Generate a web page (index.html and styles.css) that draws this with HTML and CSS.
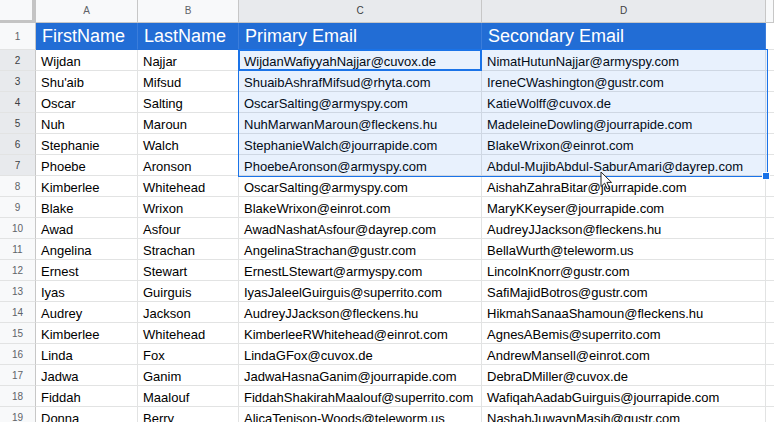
FILE: index.html
```html
<!DOCTYPE html>
<html>
<head>
<meta charset="utf-8">
<link rel="stylesheet" href="styles.css">
</head>
<body>
<div class="sheet">
  <div class="row colhead">
    <div class="corner"></div>
    <div class="ch">A</div>
    <div class="ch">B</div>
    <div class="ch sel">C</div>
    <div class="ch sel">D</div>
    <div class="ch rest"></div>
  </div>
  <div class="row head">
    <div class="rh">1</div>
    <div class="c">FirstName</div>
    <div class="c">LastName</div>
    <div class="c">Primary Email</div>
    <div class="c">Secondary Email</div>
    <div class="c rest"></div>
  </div>
  <div class="row data"><div class="rh sel">2</div><div class="c">Wijdan</div><div class="c">Najjar</div><div class="c">WijdanWafiyyahNajjar@cuvox.de</div><div class="c">NimatHutunNajjar@armyspy.com</div><div class="c rest"></div></div>
  <div class="row data"><div class="rh sel">3</div><div class="c">Shu'aib</div><div class="c">Mifsud</div><div class="c">ShuaibAshrafMifsud@rhyta.com</div><div class="c">IreneCWashington@gustr.com</div><div class="c rest"></div></div>
  <div class="row data"><div class="rh sel">4</div><div class="c">Oscar</div><div class="c">Salting</div><div class="c">OscarSalting@armyspy.com</div><div class="c">KatieWolff@cuvox.de</div><div class="c rest"></div></div>
  <div class="row data"><div class="rh sel">5</div><div class="c">Nuh</div><div class="c">Maroun</div><div class="c">NuhMarwanMaroun@fleckens.hu</div><div class="c">MadeleineDowling@jourrapide.com</div><div class="c rest"></div></div>
  <div class="row data"><div class="rh sel">6</div><div class="c">Stephanie</div><div class="c">Walch</div><div class="c">StephanieWalch@jourrapide.com</div><div class="c">BlakeWrixon@einrot.com</div><div class="c rest"></div></div>
  <div class="row data"><div class="rh sel">7</div><div class="c">Phoebe</div><div class="c">Aronson</div><div class="c">PhoebeAronson@armyspy.com</div><div class="c">Abdul-MujibAbdul-SaburAmari@dayrep.com</div><div class="c rest"></div></div>
  <div class="row data"><div class="rh">8</div><div class="c">Kimberlee</div><div class="c">Whitehead</div><div class="c">OscarSalting@armyspy.com</div><div class="c">AishahZahraBitar@jourrapide.com</div><div class="c rest"></div></div>
  <div class="row data"><div class="rh">9</div><div class="c">Blake</div><div class="c">Wrixon</div><div class="c">BlakeWrixon@einrot.com</div><div class="c">MaryKKeyser@jourrapide.com</div><div class="c rest"></div></div>
  <div class="row data"><div class="rh">10</div><div class="c">Awad</div><div class="c">Asfour</div><div class="c">AwadNashatAsfour@dayrep.com</div><div class="c">AudreyJJackson@fleckens.hu</div><div class="c rest"></div></div>
  <div class="row data"><div class="rh">11</div><div class="c">Angelina</div><div class="c">Strachan</div><div class="c">AngelinaStrachan@gustr.com</div><div class="c">BellaWurth@teleworm.us</div><div class="c rest"></div></div>
  <div class="row data"><div class="rh">12</div><div class="c">Ernest</div><div class="c">Stewart</div><div class="c">ErnestLStewart@armyspy.com</div><div class="c">LincolnKnorr@gustr.com</div><div class="c rest"></div></div>
  <div class="row data"><div class="rh">13</div><div class="c">Iyas</div><div class="c">Guirguis</div><div class="c">IyasJaleelGuirguis@superrito.com</div><div class="c">SafiMajidBotros@gustr.com</div><div class="c rest"></div></div>
  <div class="row data"><div class="rh">14</div><div class="c">Audrey</div><div class="c">Jackson</div><div class="c">AudreyJJackson@fleckens.hu</div><div class="c">HikmahSanaaShamoun@fleckens.hu</div><div class="c rest"></div></div>
  <div class="row data"><div class="rh">15</div><div class="c">Kimberlee</div><div class="c">Whitehead</div><div class="c">KimberleeRWhitehead@einrot.com</div><div class="c">AgnesABemis@superrito.com</div><div class="c rest"></div></div>
  <div class="row data"><div class="rh">16</div><div class="c">Linda</div><div class="c">Fox</div><div class="c">LindaGFox@cuvox.de</div><div class="c">AndrewMansell@einrot.com</div><div class="c rest"></div></div>
  <div class="row data"><div class="rh">17</div><div class="c">Jadwa</div><div class="c">Ganim</div><div class="c">JadwaHasnaGanim@jourrapide.com</div><div class="c">DebraDMiller@cuvox.de</div><div class="c rest"></div></div>
  <div class="row data"><div class="rh">18</div><div class="c">Fiddah</div><div class="c">Maalouf</div><div class="c">FiddahShakirahMaalouf@superrito.com</div><div class="c">WafiqahAadabGuirguis@jourrapide.com</div><div class="c rest"></div></div>
  <div class="row data"><div class="rh">19</div><div class="c">Donna</div><div class="c">Berry</div><div class="c">AlicaTenison-Woods@teleworm.us</div><div class="c">NashahJuwaynMasih@gustr.com</div><div class="c rest"></div></div>

  <div class="selection"></div>
  <div class="active"></div>
  <div class="handle"></div>
  <svg class="cursor" width="14" height="20" viewBox="0 0 14 20">
    <path d="M1 1 L1 15.5 L4.6 12.2 L7.2 18 L9.4 17 L6.9 11.4 L11.6 11.4 Z" fill="#fff" stroke="#222" stroke-width="1" stroke-linejoin="round"/>
  </svg>
</div>
</body>
</html>
```
FILE: styles.css
```css
html, body {
  margin: 0;
  padding: 0;
  background: #fff;
  overflow: hidden;
}
.sheet {
  position: relative;
  width: 774px;
  height: 422px;
  overflow: hidden;
  font-family: "Liberation Sans", Arial, sans-serif;
}
.row {
  display: grid;
  grid-template-columns: 36px 102px 101px 243px 284px 1fr;
}
.row > div {
  box-sizing: border-box;
  border-right: 1px solid #e2e3e3;
  border-bottom: 1px solid #e2e3e3;
  white-space: nowrap;
  overflow: hidden;
}
.colhead {
  height: 23px;
}
.colhead > .ch {
  background: #f8f9fa;
  border-right: 1px solid #c7c7c7;
  border-bottom: 1px solid #c7c7c7;
  color: #5f6368;
  font-size: 10px;
  display: flex;
  align-items: center;
  justify-content: center;
  padding-bottom: 1px;
}
.colhead > .ch.sel {
  background: #e8eaed;
  color: #3c4043;
}
.colhead > .ch.rest {
  background: #f8f9fa;
}
.colhead > .corner {
  background: #f8f9fa;
  border-right: 4px solid #c4c4c4;
  border-bottom: 3px solid #c4c4c4;
}
.rh {
  background: #f8f9fa;
  color: #5f6368;
  font-size: 10px;
  display: flex;
  align-items: center;
  justify-content: center;
  border-right: 1px solid #c7c7c7 !important;
  border-bottom: 1px solid #e2e3e3;
}
.rh.sel {
  background: #e8eaed;
  color: #3c4043;
}
.head {
  height: 27px;
}
.head > .c {
  background: #226dd5;
  color: #fff;
  font-size: 18px;
  line-height: 21px;
  display: flex;
  align-items: flex-end;
  padding: 0 4px 2px 6px;
  border-right: 1px solid #3b7ddb;
  border-bottom: 1px solid #226dd5;
}
.head > .c.rest {
  background: #fff;
  border-right: none;
  border-bottom: 1px solid #e2e3e3;
}
.data {
  height: 21px;
}
.data > .c {
  color: #000;
  font-size: 13px;
  line-height: 15px;
  display: flex;
  align-items: flex-end;
  padding: 0 4px 1px 5px;
}
.selection {
  position: absolute;
  left: 238px;
  top: 49px;
  width: 528px;
  height: 126px;
  border: 1px solid #1a73e8;
  background: rgba(26, 115, 232, 0.1);
  pointer-events: none;
}
.active {
  position: absolute;
  left: 238px;
  top: 49px;
  width: 240px;
  height: 18px;
  border: 2px solid #1a73e8;
  pointer-events: none;
}
.handle {
  position: absolute;
  left: 762px;
  top: 172px;
  width: 6px;
  height: 6px;
  background: #1a73e8;
  border: 1px solid #fff;
}
.cursor {
  position: absolute;
  left: 600px;
  top: 171px;
}
```
